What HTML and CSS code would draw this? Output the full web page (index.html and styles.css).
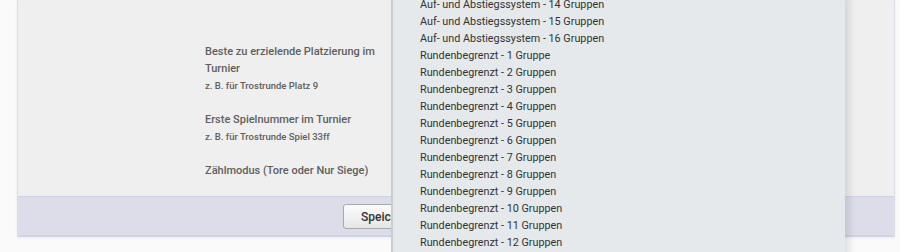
FILE: index.html
```html
<!DOCTYPE html>
<html lang="de">
<head>
<meta charset="UTF-8">
<title>Turnier bearbeiten</title>
<link rel="stylesheet" href="styles.css">
</head>
<body>

<div class="panel">
  <div class="panel-body">
    <div class="form-row">
      <label class="form-label">Beste zu erzielende Platzierung im Turnier
        <small>z. B. für Trostrunde Platz 9</small>
      </label>
    </div>
    <div class="form-row">
      <label class="form-label">Erste Spielnummer im Turnier
        <small>z. B. für Trostrunde Spiel 33ff</small>
      </label>
    </div>
    <div class="form-row">
      <label class="form-label">Zählmodus (Tore oder Nur Siege)</label>
    </div>
  </div>
  <div class="panel-footer">
    <button class="btn-save">Speichern</button>
  </div>
</div>

<!-- open select list, drawn over the form -->
<ul class="select-menu">
  <li>Auf- und Abstiegssystem - 14 Gruppen</li>
  <li>Auf- und Abstiegssystem - 15 Gruppen</li>
  <li>Auf- und Abstiegssystem - 16 Gruppen</li>
  <li>Rundenbegrenzt - 1 Gruppe</li>
  <li>Rundenbegrenzt - 2 Gruppen</li>
  <li>Rundenbegrenzt - 3 Gruppen</li>
  <li>Rundenbegrenzt - 4 Gruppen</li>
  <li>Rundenbegrenzt - 5 Gruppen</li>
  <li>Rundenbegrenzt - 6 Gruppen</li>
  <li>Rundenbegrenzt - 7 Gruppen</li>
  <li>Rundenbegrenzt - 8 Gruppen</li>
  <li>Rundenbegrenzt - 9 Gruppen</li>
  <li>Rundenbegrenzt - 10 Gruppen</li>
  <li>Rundenbegrenzt - 11 Gruppen</li>
  <li>Rundenbegrenzt - 12 Gruppen</li>
</ul>

</body>
</html>
```

FILE: styles.css
```css
/* --- Page --- */
body {
  margin: 0;
  background-color: #fafafa;
  font-family: Roboto, "Liberation Sans", Arial, sans-serif;
  color: #333;
  height: 252px;
  overflow: hidden;
}

/* --- Form panel --- */
.panel {
  margin: 0 5px 0 17px;
  background-color: #efefef;
  border-left: 1px solid #dcdce4;
  border-right: 1px solid #dcdce4;
  box-shadow: 0 1px 3px rgba(0, 0, 0, 0.06);
}

.panel-body {
  padding: 43px 0 17px 187px;
}

.form-row {
  margin-bottom: 17px;
}

.form-row:last-child {
  margin-bottom: 0;
}

.form-label {
  display: block;
  width: 175px;
  font-size: 11px;
  font-weight: 500;
  line-height: 17px;
  color: #606060;
}

.form-label small {
  display: block;
  font-size: 9.5px;
  font-weight: 500;
  line-height: 17px;
  color: #606060;
}

/* --- Footer with buttons --- */
.panel-footer {
  height: 38px;
  background-color: #dddce9;
  border-top: 1px solid #d3d2e4;
  border-bottom: 2px solid #d3d2e4;
  padding-left: 325px;
}

.btn-save {
  margin-top: 7px;
  height: 25px;
  padding: 0 17px;
  font-family: inherit;
  font-size: 12px;
  font-weight: 500;
  color: #333;
  background: linear-gradient(#fbfbfb, #e6e6e6);
  border: 1px solid #a9a9b0;
  border-radius: 3px;
}

/* --- Open dropdown list --- */
.select-menu {
  position: absolute;
  top: -4px;
  left: 391px;
  width: 454px;
  height: 262px;
  box-sizing: border-box;
  margin: 0;
  padding: 0 0 0 27px;
  list-style: none;
  background-color: #e5e9ec;
  border-left: 2px solid #c9ccd0;
  box-shadow: 5px 0 6px rgba(0, 0, 0, 0.1);
  font-family: Roboto, "Liberation Sans", sans-serif;
  font-size: 10.8px;
  color: #333;
}

.select-menu li {
  height: 17px;
  line-height: 17px;
  white-space: nowrap;
}
```
